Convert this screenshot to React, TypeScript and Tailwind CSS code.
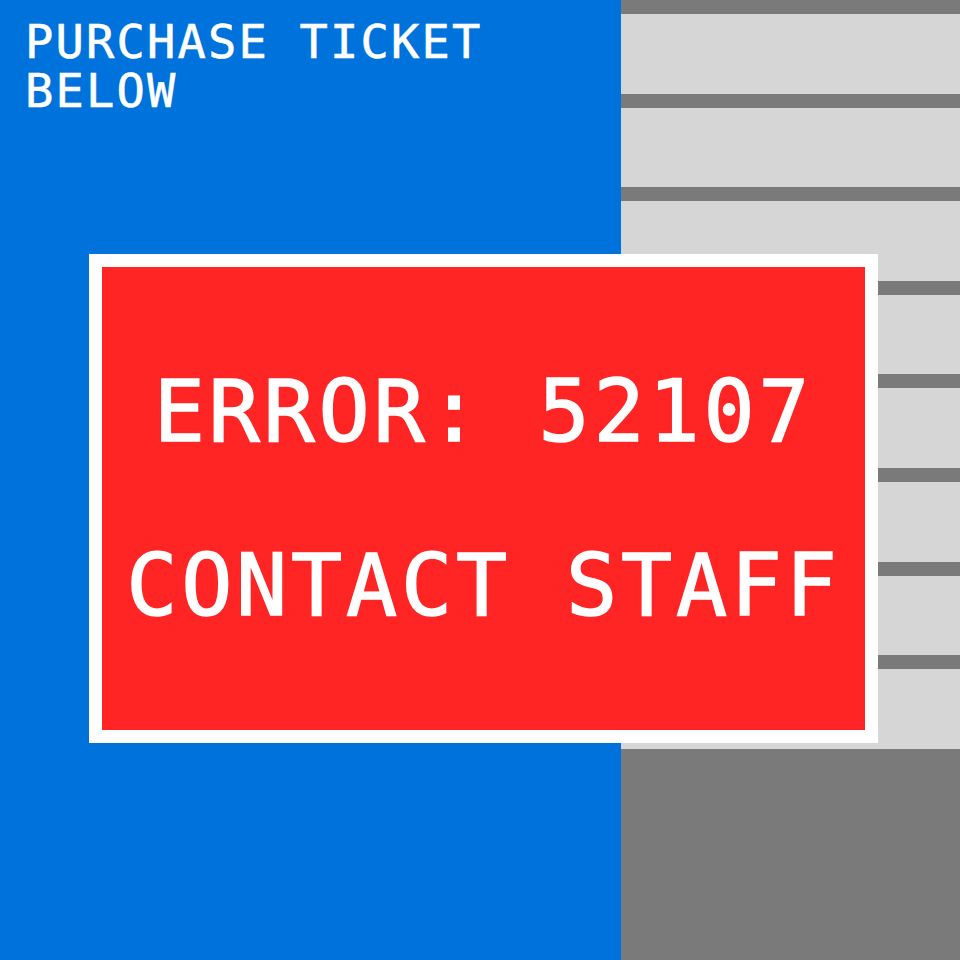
import React from 'react';

const rows = [0, 1, 2, 3, 4, 5, 6, 7];

const App: React.FC = () => {
    return (
        <div className="relative flex w-[960px] h-[960px] overflow-hidden" style={{fontFamily: '"DejaVu Sans Mono", "Liberation Mono", monospace'}}>
            {/* ticket machine screen */}
            <div className="w-[621px] h-full bg-[#0072dc] pl-[25px] pt-[17px]">
                <p className="text-white text-[47px] leading-[49px] tracking-[2.2px] uppercase [-webkit-text-stroke:0.6px_white]">
                    Purchase ticket below
                </p>
            </div>

            {/* striped wall on the right */}
            <div className="flex-1 h-full flex flex-col bg-[#7a7a7a]">
                {rows.map((row) => (
                    <div key={row} className="h-[93.6px] flex flex-col shrink-0">
                        <div className="h-[14px] bg-[#7a7a7a]"></div>
                        <div className="flex-1 bg-[#d6d6d6]"></div>
                    </div>
                ))}
            </div>

            {/* error popup */}
            <div className="absolute left-[89px] top-[254px] w-[789px] h-[489px] bg-white p-[13px]">
                <div className="w-full h-full bg-[#ff2525] flex flex-col items-center justify-center gap-[89px] text-white text-[85px] leading-[85px] tracking-[3.8px] [-webkit-text-stroke:1.5px_white]">
                    <p>ERROR: 52107</p>
                    <p>CONTACT STAFF</p>
                </div>
            </div>
        </div>
    );
};

export default App;
